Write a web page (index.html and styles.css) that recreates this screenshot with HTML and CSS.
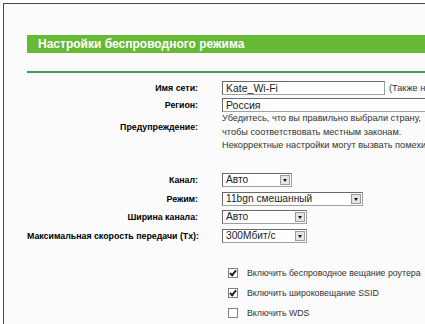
FILE: index.html
```html
<!DOCTYPE html>
<html lang="ru">
<head>
    <meta charset="UTF-8">
    <title>Настройки беспроводного режима</title>
    <link rel="stylesheet" href="styles.css">
</head>
<body>
    <div class="frame">
        <div class="title">Настройки беспроводного режима</div>
        <div class="rule"></div>

        <div class="form">
            <div class="row">
                <div class="label">Имя сети:</div>
                <div class="field">
                    <span class="input ssid">Kate_Wi-Fi</span>
                    <span class="hint">(Также называется SSID)</span>
                </div>
            </div>
            <div class="row">
                <div class="label">Регион:</div>
                <div class="field"><span class="input region">Россия</span></div>
            </div>
            <div class="row warn">
                <div class="label">Предупреждение:</div>
                <div class="field note">
                    Убедитесь, что вы правильно выбрали страну,<br>
                    чтобы соответствовать местным законам.<br>
                    Некорректные настройки могут вызвать помехи.
                </div>
            </div>

            <div class="row first">
                <div class="label">Канал:</div>
                <div class="field"><span class="select w70">Авто<i class="arrow"></i></span></div>
            </div>
            <div class="row">
                <div class="label">Режим:</div>
                <div class="field"><span class="select w141">11bgn смешанный<i class="arrow"></i></span></div>
            </div>
            <div class="row">
                <div class="label">Ширина канала:</div>
                <div class="field"><span class="select w85">Авто<i class="arrow"></i></span></div>
            </div>
            <div class="row">
                <div class="label">Максимальная скорость передачи (Tx):</div>
                <div class="field"><span class="select w85">300Мбит/с<i class="arrow"></i></span></div>
            </div>

            <div class="checks">
                <label class="check"><span class="box on"></span>Включить беспроводное вещание роутера</label>
                <label class="check"><span class="box on"></span>Включить широковещание SSID</label>
                <label class="check"><span class="box"></span>Включить WDS</label>
            </div>
        </div>
    </div>
</body>
</html>
```

FILE: styles.css
```css
html, body {
    margin: 0;
    height: 100%;
    overflow: hidden;
    background-color: #ffffff;
}

body {
    font-family: "Liberation Sans", Arial, sans-serif;
    font-size: 9.2px;
    color: #222;
}

.frame {
    margin: 3px 0 0 3px;
    height: 100%;
    border-left: 1px solid #4a4a4a;
    border-top: 1px solid #4a4a4a;
    background-color: #fbfbfb;
    padding: 31px 0 0 23px;
    white-space: nowrap;
}

.title {
    height: 18px;
    line-height: 18px;
    background-color: #66b935;
    color: #fff;
    font-weight: bold;
    font-size: 12px;
    padding-left: 11px;
}

.rule {
    margin-top: 18px;
    border-top: 2px solid #3f9a5e;
}

.form {
    margin-top: 6px;
}

.row {
    display: grid;
    grid-template-columns: 171px 1fr;
    column-gap: 24px;
    align-items: center;
    height: 17px;
}

.row.warn {
    height: 40.5px;
    margin-top: -1px;
    align-items: start;
}

.row.warn .label {
    padding-top: 10px;
}

.row.first {
    margin-top: 19px;
}

.row.first + .row,
.row.first + .row + .row,
.row.first + .row + .row + .row {
    margin-top: 1.5px;
}

.label {
    text-align: right;
    font-weight: bold;
    font-size: 8.8px;
    color: #000;
}

.field {
    display: flex;
    align-items: center;
}

.note {
    display: block;
    line-height: 13.5px;
    color: #333;
}

.input,
.select {
    position: relative;
    flex-shrink: 0;
    box-sizing: border-box;
    height: 14px;
    line-height: 12px;
    padding-left: 3px;
    background-color: #fff;
    border: 1px solid #a0a0a0;
    border-top-color: #6a6a6a;
    border-left-color: #6a6a6a;
    color: #222;
    font-size: 10.5px;
}

.select {
    font-size: 10.2px;
}

.ssid {
    width: 163px;
}

.region {
    width: 240px;
}

.hint {
    margin-left: 4px;
    color: #333;
}

.w70 { width: 70px; }
.w85 { width: 85px; }
.w141 { width: 141px; }

.arrow {
    position: absolute;
    right: 1px;
    top: 1px;
    width: 10px;
    height: 10px;
    box-sizing: border-box;
    background-color: #e4e4e4;
    border: 1px solid #9a9a9a;
}

.arrow::after {
    content: "";
    position: absolute;
    left: 2px;
    top: 3px;
    border-left: 2px solid transparent;
    border-right: 2px solid transparent;
    border-top: 3px solid #111;
}

.checks {
    margin-top: 19px;
    padding-left: 201px;
}

.check {
    display: flex;
    align-items: center;
    height: 20px;
    color: #333;
    font-size: 8.8px;
}

.box {
    position: relative;
    flex-shrink: 0;
    box-sizing: border-box;
    width: 10px;
    height: 10px;
    margin-right: 9px;
    background-color: #fff;
    border: 1px solid #808080;
}

.box.on::after {
    content: "";
    position: absolute;
    left: 2px;
    top: 0px;
    width: 2px;
    height: 5px;
    border-right: 2px solid #222;
    border-bottom: 2px solid #222;
    transform: rotate(40deg);
}
```
